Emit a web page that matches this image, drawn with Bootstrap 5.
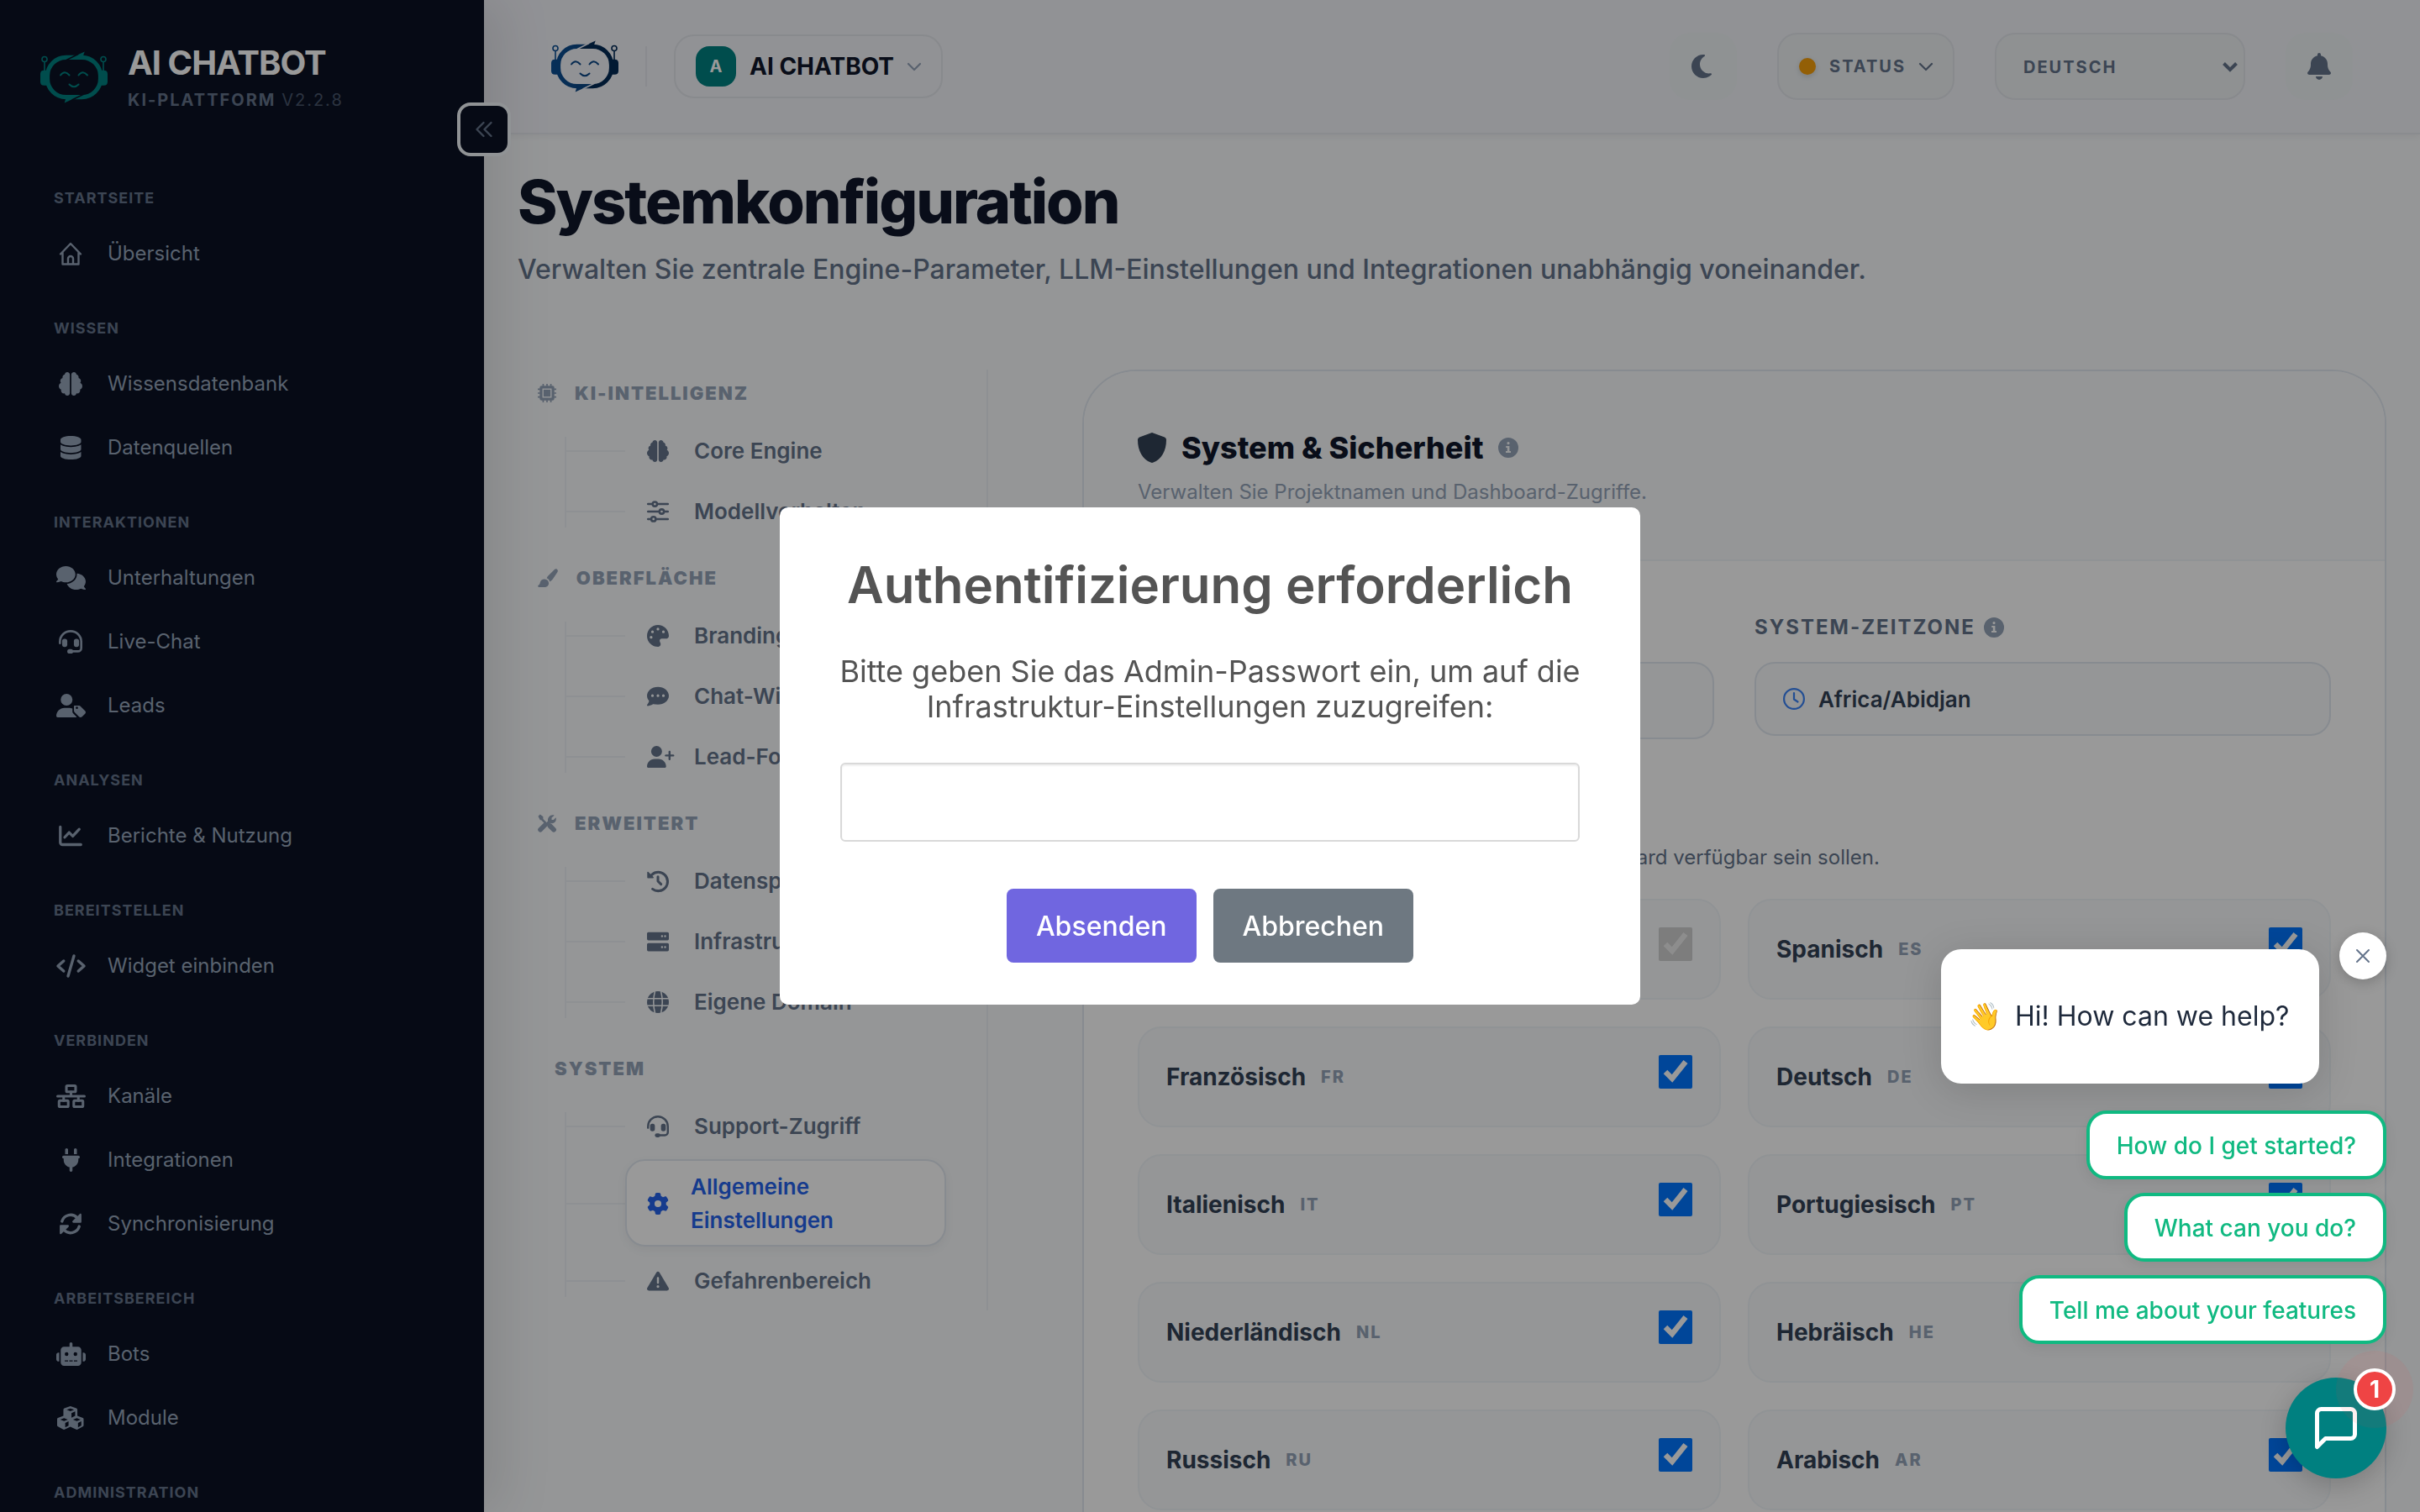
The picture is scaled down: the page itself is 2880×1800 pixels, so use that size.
<!DOCTYPE html>
<html lang="de">
<head>
<meta charset="utf-8">
<meta name="viewport" content="width=device-width, initial-scale=1">
<title>Systemkonfiguration – AI CHATBOT</title>
<link href="https://cdn.jsdelivr.net/npm/bootstrap@5.3.0/dist/css/bootstrap.min.css" rel="stylesheet">
<style>
  body { font-family: Inter, "Liberation Sans", sans-serif; background: #f8fafc; color: #0f172a; font-size: 24px; }
  a { color: inherit; text-decoration: none; }
  svg { display: block; flex: none; overflow: visible; }
  .ic { height: 28px; width: auto; fill: currentColor; }
  .stroked { fill: none; stroke: currentColor; stroke-linecap: round; stroke-linejoin: round; }

  /* Sidebar */
  .app-side { width: 576px; background: #0b1224; color: #94a3b8; padding: 53px 48px 0; box-shadow: 20px 0 60px rgba(0,0,0,.1); z-index: 5; }
  .brand-title { font-size: 40px; font-weight: 700; line-height: 44px; letter-spacing: -1px; color: #fff; }
  .brand-sub { font-size: 20px; line-height: 24px; font-weight: 700; letter-spacing: 2px; color: #64748b; margin-top: 10px; }
  .brand-sub span { font-weight: 400; opacity: .7; }
  .side-groups { margin-top: 93px; padding: 0 16px; }
  .side-group { margin-bottom: 39px; }
  .side-title { font-size: 18px; line-height: 24px; font-weight: 700; letter-spacing: 1px; color: #64748b; margin: 0 0 16px; }
  .side-link { height: 76px; gap: 24px; }
  .side-link .ibox { width: 40px; display: flex; justify-content: center; }
  .side-toggle { position: absolute; left: 544px; top: 122px; width: 64px; height: 64px; border: 4px solid #f1f5f9; border-radius: 16px; background: #0b1224; color: #64748b; padding: 0; z-index: 6; }

  /* Top bar */
  .app-top { height: 160px; padding: 0 80px; background: #f2f3f9; border-bottom: 2px solid #e6e9ef; box-shadow: 0 2px 8px rgba(0,0,0,.06); }
  .vline { width: 2px; height: 48px; background: #e6e8ee; margin: 0 32px; }
  .pill { border: 2px solid #e3e6eb; border-radius: 24px; background: transparent; }
  .project { height: 76px; padding: 0 24px; gap: 16px; font-size: 28px; font-weight: 700; color: #0f172a; }
  .project-ini { width: 48px; height: 48px; border-radius: 16px; background: #008080; color: #fff; font-size: 20px; font-weight: 700; }
  .tool { height: 80px; color: #64748b; background: #eef2f4; font-size: 20px; font-weight: 700; letter-spacing: 2px; }
  .tool-sq { width: 80px; height: 80px; border: 0; border-radius: 24px; background: #eff3f5; color: #64748b; }
  .state-dot { width: 20px; height: 20px; border-radius: 50%; background: #f59e0b; box-shadow: 0 2px 6px rgba(0,0,0,.15); }
  .lang-pick { width: 298px; padding: 2px 32px 0; appearance: none; outline: 0; }
  .lang-arrow { position: absolute; right: 9px; top: 35px; pointer-events: none; color: #64748b; }

  /* Page */
  .page { padding: 40px 40px 0; }
  .page-title { font-size: 72px; line-height: 80px; font-weight: 800; letter-spacing: -2px; margin: 0; color: #0f172a; }
  .page-sub { font-size: 32px; line-height: 40px; font-weight: 500; margin: 21px 0 99px; color: #64748b; }
  .set-nav { width: 560px; flex: none; border-right: 2px solid #edf1f5; padding-bottom: 4px; }
  .set-head { padding: 16px 0 24px 24px; gap: 20px; font-size: 22px; line-height: 24px; font-weight: 900; letter-spacing: 2px; color: #94a3b8; margin: 0; }
  .set-head svg { height: 22px; margin-right: 2px; }
  .set-list + .set-head { margin-top: 20px; }
  .set-list { margin: 0 48px 0 56px; padding: 0 0 0 72px; list-style: none; display: flex; flex-direction: column; gap: 8px; position: relative; }
  .set-list::before { content: ""; position: absolute; left: 0; top: 16px; bottom: 12px; width: 2px; background: #edf1f5; }
  .set-list li { position: relative; }
  .set-list li::before { content: ""; position: absolute; left: -72px; width: 72px; top: 50%; height: 2px; background: #edf1f5; }
  .set-link { position: relative; min-height: 64px; padding: 11px 24px 9px; border: 2px solid transparent; border-radius: 24px; gap: 24px; font-size: 26px; line-height: 40px; font-weight: 600; color: #64748b; }
  .set-link .ibox { width: 32px; flex: none; }
  .set-link svg { height: 26px; }
  .set-link.on { background: #fff; border-color: #e2e8f0; color: #2563eb; box-shadow: 0 4px 12px rgba(0,0,0,.05); }
  .set-link.on .ibox { width: 28px; }

  .panel { border: 2px solid #e2e8f0; border-radius: 64px; background: #fff; overflow: hidden; margin-left: 112px; }
  .panel-top { background: #f8fafc; padding: 64px 64px 62px; border-bottom: 2px solid #f1f5f9; }
  .panel-title { font-size: 36px; line-height: 54px; font-weight: 800; margin: 0; gap: 18px; color: #0f172a; }
  .panel-sub { line-height: 36px; margin: 8px 0 0; color: #94a3b8; }
  .panel-main { padding: 64px; }
  .fld-label { line-height: 30px; font-weight: 700; letter-spacing: 2px; color: #64748b; gap: 10px; margin: 0; }
  .two-col { display: grid; grid-template-columns: 1fr 1fr; }
  .fld { margin-top: 26px; width: 100%; border: 2px solid #e2e8f0; border-radius: 24px; background: #f8fafc; padding: 0 32px; font-size: 26px; font-weight: 600; color: #334155; gap: 16px; text-align: left; }
  .lang-card { height: 120px; border: 2px solid #f1f5f9; border-radius: 28px; background: #f8fafc; padding: 0 32px; }
  .lang-card b { font-size: 28px; font-weight: 700; color: #334155; }
  .lang-card span { font-size: 20px; font-weight: 800; letter-spacing: 2px; color: #94a3b8; margin-left: 18px; }
  .lang-card input { width: 40px; height: 40px; margin: 0 0 12px; }
  .hint { line-height: 36px; color: #64748b; margin: 45px 0 31px; }

  /* Dialog */
  .veil { position: fixed; inset: 0; z-index: 1060; background: rgba(0,0,0,.4); }
  .ask { width: 1024px; border-radius: 10px; background: #fff; color: #545454; padding: 56px 0 50px; text-align: center; }
  .ask h2 { font-size: 60px; line-height: 72px; font-weight: 600; margin: 0; }
  .ask label { display: block; font-size: 36px; line-height: 42px; margin: 46px 0; padding: 0 58px; }
  .ask input { display: block; width: 880px; height: 94px; margin: 0 auto 56px; border: 2px solid #d9d9d9; border-radius: 6px; padding: 0 24px; font-size: 36px; box-shadow: inset 0 2px 2px rgba(0,0,0,.06); outline: 0; }
  .ask-btn { height: 88px; padding: 2px 35px 0; border: 0; border-radius: 8px; font-size: 32px; font-weight: 500; color: #fff; background: #7066e0; }
  .ask-btn-alt { background: #6e7881; }

  /* Chat launcher */
  .chat { position: fixed; right: 40px; bottom: 40px; z-index: 1070; }
  .chat-x { width: 56px; height: 56px; border: 0; border-radius: 50%; background: #fff; color: #64748b; box-shadow: 0 4px 16px rgba(0,0,0,.2); margin: -20px 0 0 24px; padding: 0; }
  .chat-msg { width: 450px; height: 160px; border-radius: 24px; background: #fff; color: #1e293b; font-size: 32px; box-shadow: 0 8px 48px rgba(0,0,0,.15); padding: 0 32px; margin-bottom: 32px; gap: 16px; }
  .chat-q { height: 82px; border: 4px solid #10b981; border-radius: 24px; background: #fff; color: #10b981; font-size: 28px; font-weight: 500; padding: 2px 32px 0; margin-bottom: 16px; box-shadow: 0 4px 16px rgba(0,0,0,.08); }
  .chat-fab { position: relative; width: 120px; height: 120px; border: 0; border-radius: 50%; background: #008080; color: #fff; margin-top: 24px; box-shadow: 0 8px 32px rgba(0,0,0,.2); }
  .chat-count { position: absolute; right: -11px; top: -11px; width: 50px; height: 50px; border: 4px solid #fff; border-radius: 50%; background: #ef4444; font-size: 28px; font-weight: 700; line-height: 42px; box-shadow: 0 0 0 21px rgba(239,68,68,.08); }
</style>
</head>
<body>
<svg width="0" height="0" class="position-absolute" aria-hidden="true">
  <defs>
    <linearGradient id="duo" gradientUnits="userSpaceOnUse" x1="0" y1="0" x2="80" y2="0"><stop offset="0" stop-color="#0b4f94"/><stop offset=".45" stop-color="#0a4786"/><stop offset=".6" stop-color="#022a55"/><stop offset="1" stop-color="#022a55"/></linearGradient>
    <symbol id="i-brain" viewBox="0 0 512 512"><path d="M184 0C214.900 0 240 25.100 240 56V456c0 30.900-25.100 56-56 56c-28.900 0-52.700-21.900-55.700-50.100c-5.200 1.400-10.700 2.100-16.300 2.100c-35.300 0-64-28.700-64-64c0-7.400 1.300-14.600 3.600-21.200C21.400 367.400 0 338.200 0 304c0-31.900 18.700-59.500 45.800-72.300C37.100 220.800 32 207 32 192c0-30.700 21.600-56.300 50.400-62.600C80.800 123.900 80 118 80 112c0-29.900 20.600-55.100 48.300-62.100C131.300 21.900 155.100 0 184 0z"/><path transform="matrix(-1 0 0 1 512 0)" d="M184 0C214.900 0 240 25.100 240 56V456c0 30.900-25.100 56-56 56c-28.900 0-52.700-21.900-55.700-50.100c-5.200 1.400-10.700 2.100-16.300 2.100c-35.300 0-64-28.700-64-64c0-7.400 1.300-14.600 3.600-21.200C21.400 367.400 0 338.200 0 304c0-31.900 18.700-59.500 45.800-72.300C37.100 220.800 32 207 32 192c0-30.700 21.600-56.300 50.400-62.600C80.800 123.900 80 118 80 112c0-29.900 20.600-55.100 48.300-62.100C131.300 21.900 155.100 0 184 0z"/></symbol>
    <symbol id="i-headset" viewBox="0 0 512 512"><path fill="none" stroke="currentColor" stroke-width="48" stroke-linecap="round" d="M24 288v-32a232 232 0 0 1 464 0v136a72 72 0 0 1-72 72H256"/><rect x="72" y="192" width="112" height="176" rx="52"/><rect x="328" y="192" width="112" height="176" rx="52"/><rect x="184" y="416" width="128" height="96" rx="48"/></symbol>
  </defs>
</svg>

<div class="d-flex vh-100 overflow-hidden position-relative">
  <aside class="app-side flex-shrink-0">
    <div class="d-flex align-items-center gap-4">
      <svg width="80" height="64" viewBox="0 0 80 62" fill="none" stroke="#008080" aria-hidden="true">
        <rect x="8.500" y="7.300" width="63" height="47.400" rx="22" stroke-width="5.200"/>
        <path d="M32 10L52.700 .500L49.500 10zM49 52L28.700 61.500L31.500 52z" fill="#008080" stroke="none"/>
        <path d="M31 10.500L45 3.500M37.500 58L52 51" stroke="#0b1224" stroke-width="1.400"/>
        <path d="M0 27q0-4.300 4.500-4.300H8v18H4.500Q0 40.700 0 36.500zM80 27q0-4.300-4.500-4.300H72v18h3.500q4.500 0 4.500-4.200z" fill="#008080" stroke="none"/>
        <path d="M5 12.500V24M75 12.500V24" stroke-width="1.600"/><circle cx="5" cy="9.500" r="3" stroke-width="1.600"/><circle cx="75" cy="9.500" r="3" stroke-width="1.600"/>
        <path d="M24 28.500q5-6.500 10.500 0M45.500 28.500q5-6.500 10.500 0M34.500 39.500q5.500 5.500 11 0" stroke-width="2" stroke-linecap="round"/>
      </svg>
      <div>
        <div class="brand-title">AI CHATBOT</div>
        <div class="brand-sub">KI-PLATTFORM <span>V2.2.8</span></div>
      </div>
    </div>
    <nav class="side-groups">
      <section class="side-group"><h6 class="side-title">STARTSEITE</h6>
        <a href="#" class="side-link d-flex align-items-center"><span class="ibox"><svg class="ic stroked" viewBox="0 0 28 28" stroke-width="2.400"><path d="M2 14.500L14 2l12 12.500M4.500 12.500v14h19v-14M11 26v-6a3 3 0 0 1 6 0v6"/></svg></span>Übersicht</a>
      </section>
      <section class="side-group"><h6 class="side-title">WISSEN</h6>
        <a href="#" class="side-link d-flex align-items-center"><span class="ibox"><svg class="ic" viewBox="0 0 512 512"><use href="#i-brain"/></svg></span>Wissensdatenbank</a>
        <a href="#" class="side-link d-flex align-items-center"><span class="ibox"><svg class="ic" viewBox="0 0 448 512"><path d="M448 80v48c0 44.200-100.300 80-224 80S0 172.200 0 128V80C0 35.800 100.300 0 224 0S448 35.800 448 80zM393.200 214.700c20.800-7.400 39.900-16.900 54.800-28.600V288c0 44.200-100.300 80-224 80S0 332.200 0 288V186.100c14.900 11.800 34 21.200 54.800 28.600C99.700 230.700 159.500 240 224 240s124.300-9.300 169.200-25.300zM0 346.100c14.900 11.800 34 21.200 54.800 28.600C99.700 390.700 159.500 400 224 400s124.300-9.300 169.200-25.300c20.800-7.400 39.900-16.900 54.800-28.600V432c0 44.200-100.300 80-224 80S0 476.200 0 432V346.100z"/></svg></span>Datenquellen</a>
      </section>
      <section class="side-group"><h6 class="side-title">INTERAKTIONEN</h6>
        <a href="#" class="side-link d-flex align-items-center"><span class="ibox"><svg class="ic" viewBox="0 0 640 512"><path d="M208 352c114.900 0 208-78.800 208-176S322.900 0 208 0S0 78.800 0 176c0 38.600 14.700 74.300 39.600 103.400c-3.500 9.400-8.700 17.700-14.200 24.700c-4.800 6.200-9.700 11-13.300 14.300c-1.800 1.600-3.300 2.900-4.300 3.700c-.5 .4-.9 .7-1.100 .8l-.2 .2C1 327.200-1.400 334.400 .8 340.900S9.100 352 16 352c21.800 0 43.800-5.600 62.100-12.500c9.200-3.500 17.800-7.400 25.200-11.400C134.100 343.300 169.800 352 208 352zM448 176c0 112.300-99.100 196.900-216.500 207C255.800 457.400 336.400 512 432 512c38.200 0 73.900-8.700 104.700-23.900c7.500 4 16 7.900 25.200 11.400c18.300 6.900 40.300 12.500 62.100 12.500c6.900 0 13.100-4.500 15.200-11.100c2.100-6.600-.2-13.800-5.800-17.900c-3-2-20-17-33.100-43.700c24.900-29 39.600-64.700 39.600-103.400c0-92.800-84.900-168.900-192.600-175.500c.4 5.100 .6 10.300 .6 15.500z"/></svg></span>Unterhaltungen</a>
        <a href="#" class="side-link d-flex align-items-center"><span class="ibox"><svg class="ic" viewBox="0 0 512 512"><use href="#i-headset"/></svg></span>Live-Chat</a>
        <a href="#" class="side-link d-flex align-items-center"><span class="ibox"><svg class="ic" viewBox="0 0 640 512"><path d="M224 256A128 128 0 1 0 224 0a128 128 0 1 0 0 256zM178 304C80 304 0 384 0 482c0 17 13 30 30 30H416c13 0 22-5 27-10l-72-74c-15-15-20-27-20-45v-63c-24-10-48-16-81-16z"/><path fill-rule="evenodd" d="M384 270v97c0 14 6 27 15 37l96 96c18 18 47 18 65 0l66-66c18-18 18-47 0-65l-97-97c-9-9-22-14-35-14h-98c-7 0-12 5-12 12zm64 58a24 24 0 1 1 0-48a24 24 0 1 1 0 48z"/></svg></span>Leads</a>
      </section>
      <section class="side-group"><h6 class="side-title">ANALYSEN</h6>
        <a href="#" class="side-link d-flex align-items-center"><span class="ibox"><svg class="ic stroked" viewBox="0 0 512 512" stroke-width="60"><path d="M32 64v336c0 26 22 48 48 48h400M128 288l96-104l80 80l140-150"/></svg></span>Berichte &amp; Nutzung</a>
      </section>
      <section class="side-group"><h6 class="side-title">BEREITSTELLEN</h6>
        <a href="#" class="side-link d-flex align-items-center"><span class="ibox"><svg class="ic stroked" viewBox="0 0 640 512" stroke-width="62"><path d="M160 146L36 256l124 110M480 146l124 110l-124 110M384 36L256 476"/></svg></span>Widget einbinden</a>
      </section>
      <section class="side-group"><h6 class="side-title">VERBINDEN</h6>
        <a href="#" class="side-link d-flex align-items-center"><span class="ibox"><svg class="ic stroked" viewBox="0 0 640 512" stroke-width="56"><path d="M28 256h584M320 160v96M160 256v96M480 256v96"/><rect x="220" y="28" width="200" height="132" rx="20"/><rect x="60" y="352" width="200" height="132" rx="20"/><rect x="380" y="352" width="200" height="132" rx="20"/></svg></span>Kanäle</a>
        <a href="#" class="side-link d-flex align-items-center"><span class="ibox"><svg class="ic" viewBox="0 0 384 512"><path d="M96 0C78.300 0 64 14.300 64 32v96h64V32c0-17.700-14.300-32-32-32zM288 0c-17.700 0-32 14.300-32 32v96h64V32c0-17.700-14.300-32-32-32zM32 160c-17.700 0-32 14.300-32 32s14.300 32 32 32v32c0 77.400 55 142 128 156.800V480c0 17.700 14.300 32 32 32s32-14.300 32-32V412.800C297 398 352 333.400 352 256V224c17.700 0 32-14.300 32-32s-14.300-32-32-32H32z"/></svg></span>Integrationen</a>
        <a href="#" class="side-link d-flex align-items-center"><span class="ibox"><svg class="ic" viewBox="0 0 512 512"><path fill="none" stroke="currentColor" stroke-width="62" stroke-linecap="round" d="M68 200A196 196 0 0 1 400 125M444 312A196 196 0 0 1 112 387"/><path d="M492 56v152c0 14-10 24-24 24H316c-22 0-30-24-16-38L454 40c14-14 38-6 38 16zM20 456V304c0-14 10-24 24-24h152c22 0 30 24 16 38L58 472c-14 14-38 6-38-16z"/></svg></span>Synchronisierung</a>
      </section>
      <section class="side-group"><h6 class="side-title">ARBEITSBEREICH</h6>
        <a href="#" class="side-link d-flex align-items-center"><span class="ibox"><svg class="ic" viewBox="0 0 640 512"><path fill-rule="evenodd" d="M320 0c18 0 32 14 32 32v64h120c40 0 72 32 72 72v272c0 40-32 72-72 72H168c-40 0-72-32-72-72V168c0-40 32-72 72-72h120V32c0-18 14-32 32-32zM184 392v24h72v-24zm100 0v24h72v-24zm100 0v24h72v-24zM264 256a40 40 0 1 0-80 0a40 40 0 1 0 80 0zm152 40a40 40 0 1 0 0-80a40 40 0 1 0 0 80zM48 224h16v192H48c-26 0-48-22-48-48v-96c0-26 22-48 48-48zm544 0c26 0 48 22 48 48v96c0 26-22 48-48 48h-16V224z"/></svg></span>Bots</a>
        <a href="#" class="side-link d-flex align-items-center"><span class="ibox"><svg class="ic" viewBox="0 0 576 512"><path fill-rule="evenodd" d="M288 0l132 46q20 8 20 30v136l120 42q16 8 16 28v132q0 20-18 30l-116 64q-14 6-28 0l-126-62l-126 62q-14 6-28 0L18 444Q0 434 0 414V282q0-20 16-28l120-42V76q0-22 20-30zM288 48l-80 30l80 30l80-30zM312 150v100l80-38v-98zM150 262l-82 30l82 32l82-32zM176 366v96l72-36v-96zM428 262l-82 30l82 32l82-32zM454 366v96l72-40v-92z"/></svg></span>Module</a>
      </section>
      <section class="side-group"><h6 class="side-title">ADMINISTRATION</h6></section>
    </nav>
  </aside>
  <button class="side-toggle d-flex align-items-center justify-content-center" type="button" aria-label="Seitenleiste einklappen"><svg class="stroked" width="20" height="18" viewBox="0 0 20 18" stroke-width="2.400"><path d="M9.500 1L1.500 9l8 8M18.500 1l-8 8l8 8"/></svg></button>

  <div class="flex-grow-1 d-flex flex-column" style="min-width:0">
    <header class="app-top d-flex align-items-center flex-shrink-0">
      <svg width="80" height="64" viewBox="0 0 80 62" fill="none" stroke="url(#duo)" aria-hidden="true">
        <rect x="8.500" y="7.300" width="63" height="47.400" rx="22" stroke-width="5.200"/>
        <path d="M32 10L52.700 .500L49.500 10z" fill="#022a55" stroke="none"/><path d="M49 52L28.700 61.500L31.500 52z" fill="#0a4786" stroke="none"/>
        <path d="M31 10.500L45 3.500M37.500 58L52 51" stroke="#f2f3f9" stroke-width="1.400"/>
        <path d="M0 27q0-4.300 4.500-4.300H8v18H4.500Q0 40.700 0 36.500zM80 27q0-4.300-4.500-4.300H72v18h3.500q4.500 0 4.500-4.200z" fill="url(#duo)" stroke="none"/>
        <path d="M5 12.500V24" stroke="#0b4f94" stroke-width="1.600"/><path d="M75 12.500V24" stroke="#022a55" stroke-width="1.600"/><circle cx="5" cy="9.500" r="3" stroke-width="1.600"/><circle cx="75" cy="9.500" r="3" stroke-width="1.600"/>
        <path d="M24 28.500q5-6.500 10.500 0M45.500 28.500q5-6.500 10.500 0M34.500 39.500q5.500 5.500 11 0" stroke="#0a4786" stroke-width="2" stroke-linecap="round"/>
      </svg>
      <div class="vline"></div>
      <button type="button" class="project pill d-flex align-items-center"><span class="project-ini d-flex align-items-center justify-content-center">A</span>AI CHATBOT<svg class="stroked" style="color:#94a3b8" width="16" height="9" viewBox="0 0 16 9" stroke-width="2.200"><path d="M1 1l7 7l7-7"/></svg></button>
      <div class="d-flex align-items-center ms-auto gap-5">
        <button type="button" class="tool-sq d-flex align-items-center justify-content-center" aria-label="Dunkelmodus"><svg class="ic" viewBox="0 32 448 448"><path d="M223.500 32C100 32 0 132.300 0 256S100 480 223.500 480c60.600 0 115.500-24.200 155.800-63.400c5-4.900 6.300-12.500 3.100-18.700s-10.100-9.700-17-8.500c-9.800 1.700-19.800 2.600-30.100 2.600c-96.900 0-175.500-78.800-175.500-176c0-65.800 36-123.100 89.300-153.300c6.100-3.500 9.200-10.500 7.700-17.300s-7.300-11.900-14.300-12.500c-6.300-.5-12.600-.8-19-.8z"/></svg></button>
        <button type="button" class="tool pill d-flex align-items-center gap-3 px-4"><span class="state-dot"></span>STATUS<svg class="stroked" width="16" height="9" viewBox="0 0 16 9" stroke-width="2.200"><path d="M1 1l7 7l7-7"/></svg></button>
        <div class="position-relative">
          <select class="tool pill lang-pick" aria-label="Sprache"><option>DEUTSCH</option></select>
          <svg class="lang-arrow stroked" width="18" height="12" viewBox="0 0 18 12" stroke-width="4" style="stroke-linecap:butt;stroke-linejoin:miter"><path d="M1.500 1.500L9 9l7.500-7.500"/></svg>
        </div>
        <button type="button" class="tool-sq d-flex align-items-center justify-content-center" aria-label="Benachrichtigungen"><svg class="ic" style="height:32px" viewBox="0 0 448 512"><path d="M224 0c-17.700 0-32 14.300-32 32V51.200C119 66 64 130.600 64 208v18.800c0 47-17.300 92.400-48.500 127.600l-7.400 8.300c-8.400 9.400-10.400 22.900-5.300 34.400S19.400 416 32 416H416c12.600 0 24-7.400 29.200-18.900s3.100-25-5.300-34.400l-7.400-8.300C401.300 319.200 384 273.900 384 226.800V208c0-77.400-55-142-128-156.800V32c0-17.700-14.300-32-32-32zm45.300 493.300c12-12 18.700-28.300 18.700-45.300H160c0 17 6.700 33.300 18.700 45.300s28.300 18.700 45.300 18.700s33.300-6.700 45.300-18.700z"/></svg></button>
      </div>
    </header>

    <main class="page">
      <h1 class="page-title">Systemkonfiguration</h1>
      <p class="page-sub">Verwalten Sie zentrale Engine-Parameter, LLM-Einstellungen und Integrationen unabhängig voneinander.</p>
      <div class="d-flex align-items-start">
        <nav class="set-nav">
          <h2 class="set-head d-flex align-items-center"><svg class="ic" viewBox="0 0 24 24"><path d="M7 0v4M12 0v4M17 0v4M7 20v4M12 20v4M17 20v4M0 7h4M0 12h4M0 17h4M20 7h4M20 12h4M20 17h4" stroke="currentColor" stroke-width="1.800"/><path fill-rule="evenodd" d="M5 2.500h14a2.500 2.500 0 0 1 2.500 2.500v14a2.500 2.500 0 0 1-2.500 2.500H5A2.500 2.500 0 0 1 2.500 19V5A2.500 2.500 0 0 1 5 2.500zM6 6v12h12V6z"/><path d="M7.500 7.500h9v9h-9z"/></svg>KI-INTELLIGENZ</h2>
          <ul class="set-list">
            <li><a href="#" class="set-link d-flex align-items-center"><span class="ibox"><svg class="ic" viewBox="0 0 512 512"><use href="#i-brain"/></svg></span>Core Engine</a></li>
            <li><a href="#" class="set-link d-flex align-items-center"><span class="ibox"><svg class="ic stroked" viewBox="0 0 512 512" stroke-width="50"><path d="M24 80h104M240 80h248M24 256h264M400 256h88M24 432h72M208 432h280"/><circle cx="184" cy="80" r="52"/><circle cx="344" cy="256" r="52"/><circle cx="152" cy="432" r="52"/></svg></span>Modellverhalten</a></li>
          </ul>
          <h2 class="set-head d-flex align-items-center"><svg class="ic" viewBox="0 0 26 24"><path d="M25 .8c1.200.9 1.300 2.300.6 3.500l-6 9.200c-1 1.500-2.300 2.600-4 3.300c-.5-2.200-2-3.800-4-4.500c.6-1.500 1.500-2.800 2.700-3.800L22 .900c1-.8 2.100-.8 3-.1zM10 13.800c2.500.5 4.300 2.500 4.300 5c0 3-2.300 5.200-5.800 5.200H1.500C.2 24-.4 22.400.8 21.600c1.600-1 2-2 2.300-3.800c.6-2.800 3.400-4.700 6.900-4z"/></svg>OBERFLÄCHE</h2>
          <ul class="set-list">
            <li><a href="#" class="set-link d-flex align-items-center"><span class="ibox"><svg class="ic" viewBox="0 0 512 512"><path d="M512 256c0 .9 0 1.800 0 2.700c-.4 36.500-33.600 61.300-70.100 61.300H344c-26.500 0-48 21.500-48 48c0 3.400 .4 6.700 1 9.900c2.100 10.200 6.500 20 10.800 29.900c6.100 13.800 12.100 27.500 12.100 42c0 31.800-21.600 60.700-53.400 62c-3.500 .1-7 .2-10.600 .2C114.600 512 0 397.400 0 256S114.600 0 256 0S512 114.600 512 256zM128 288a32 32 0 1 0 -64 0 32 32 0 1 0 64 0zm0-96a32 32 0 1 0 0-64 32 32 0 1 0 0 64zM288 96a32 32 0 1 0 -64 0 32 32 0 1 0 64 0zm96 96a32 32 0 1 0 0-64 32 32 0 1 0 0 64z"/></svg></span>Branding</a></li>
            <li><a href="#" class="set-link d-flex align-items-center"><span class="ibox"><svg class="ic" viewBox="0 0 512 512"><path fill-rule="evenodd" d="M256 448c141 0 256-93 256-208S397 32 256 32S0 125 0 240c0 45 18 87 48 121c-5 46-30 75-42 87c-13 14-4 32 12 32c55 0 97-22 122-40c35 5 75 8 116 8zM128 208a32 32 0 1 1 0 64a32 32 0 1 1 0-64zm128 0a32 32 0 1 1 0 64a32 32 0 1 1 0-64zm128 0a32 32 0 1 1 0 64a32 32 0 1 1 0-64z"/></svg></span>Chat-Widget</a></li>
            <li><a href="#" class="set-link d-flex align-items-center"><span class="ibox"><svg class="ic" viewBox="0 0 640 512"><path d="M224 256A128 128 0 1 0 224 0a128 128 0 1 0 0 256zM178 304C80 304 0 384 0 482c0 17 13 30 30 30H418c17 0 30-13 30-30C448 384 368 304 270 304zM504 312v-64h-64c-32 0-32-48 0-48h64v-64c0-32 48-32 48 0v64h64c32 0 32 48 0 48h-64v64c0 32-48 32-48 0z"/></svg></span>Lead-Formular</a></li>
          </ul>
          <h2 class="set-head d-flex align-items-center"><svg class="ic" viewBox="0 0 24 24"><path d="M.5 3L3 .5L7 3.500v3l4 4l-2 2l-4.500-4.500H3zM13.500 12.500c1.500-.8 3.300-.5 4.500.7l5 5a3 3 0 0 1-4.500 4.500l-5-5c-1.200-1.200-1.400-3-.7-4.500z"/><path d="M21.500 1.800L18 5v2.500h2.500L23.500 4.500c1.200 3.500-1 7.500-5 7.700c-1 0-1.500 0-2.300-.4L5.500 22.600a3 3 0 0 1-4.400-4.300l8.600-8.500l1.500 1.500l2-2c-1-5 3.800-9.400 8.300-7.500z"/></svg>ERWEITERT</h2>
          <ul class="set-list">
            <li><a href="#" class="set-link d-flex align-items-center"><span class="ibox"><svg class="ic stroked" viewBox="0 0 512 512" stroke-width="60"><path d="M112 104A220 220 0 1 1 130 440M256 152v104l72 72"/><path fill="currentColor" stroke-width="30" d="M20 50v120h120z"/></svg></span>Datenspeicherung</a></li>
            <li><a href="#" class="set-link d-flex align-items-center"><span class="ibox"><svg class="ic" viewBox="0 0 512 512"><path fill-rule="evenodd" d="M32 32h448q32 0 32 32v128q0 32-32 32H32q-32 0-32-32V64Q0 32 32 32zM352 104a24 24 0 1 0 0 48a24 24 0 1 0 0-48zm72 0a24 24 0 1 0 0 48a24 24 0 1 0 0-48zM32 288h448q32 0 32 32v128q0 32-32 32H32q-32 0-32-32V320q0-32 32-32zm320 72a24 24 0 1 0 0 48a24 24 0 1 0 0-48zm72 0a24 24 0 1 0 0 48a24 24 0 1 0 0-48z"/></svg></span>Infrastruktur</a></li>
            <li><a href="#" class="set-link d-flex align-items-center"><span class="ibox"><svg class="ic" viewBox="0 0 512 512"><circle cx="256" cy="256" r="256"/><path fill="none" stroke="#f8fafc" stroke-width="30" d="M0 174h512M0 338h512M186 0q-66 256 0 512M326 0q66 256 0 512"/></svg></span>Eigene Domain</a></li>
          </ul>
          <h2 class="set-head d-flex align-items-center"><span></span>SYSTEM</h2>
          <ul class="set-list">
            <li><a href="#" class="set-link d-flex align-items-center"><span class="ibox"><svg class="ic" viewBox="0 0 512 512"><use href="#i-headset"/></svg></span>Support-Zugriff</a></li>
            <li><a href="#" class="set-link on d-flex align-items-center" aria-current="page"><span class="ibox"><svg class="ic" viewBox="0 0 512 512"><path d="M495.900 166.600c3.200 8.700 .5 18.400-6.400 24.600l-43.300 39.400c1.100 8.300 1.700 16.800 1.700 25.400s-.6 17.100-1.700 25.400l43.300 39.400c6.900 6.200 9.600 15.900 6.400 24.600c-4.400 11.900-9.700 23.300-15.800 34.300l-4.700 8.100c-6.600 11-14 21.400-22.100 31.200c-5.900 7.200-15.700 9.600-24.500 6.800l-55.700-17.700c-13.400 10.300-28.200 18.900-44 25.400l-12.500 57.100c-2 9.100-9 16.300-18.200 17.800c-13.800 2.300-28 3.500-42.500 3.500s-28.700-1.200-42.500-3.500c-9.200-1.500-16.200-8.700-18.200-17.800l-12.500-57.100c-15.800-6.500-30.600-15.100-44-25.400L83.100 425.900c-8.800 2.800-18.600 .3-24.500-6.800c-8.100-9.800-15.500-20.200-22.100-31.200l-4.700-8.100c-6.100-11-11.400-22.400-15.800-34.300c-3.200-8.700-.5-18.400 6.400-24.600l43.300-39.400C64.600 273.100 64 264.600 64 256s.6-17.100 1.700-25.400L22.400 191.200c-6.900-6.200-9.600-15.900-6.400-24.600c4.400-11.900 9.700-23.300 15.800-34.300l4.700-8.100c6.600-11 14-21.400 22.100-31.200c5.900-7.200 15.700-9.600 24.500-6.800l55.700 17.700c13.400-10.300 28.200-18.900 44-25.400l12.500-57.100c2-9.100 9-16.300 18.200-17.800C227.300 1.200 241.500 0 256 0s28.700 1.200 42.500 3.500c9.200 1.500 16.200 8.700 18.200 17.800l12.500 57.100c15.800 6.500 30.600 15.100 44 25.400l55.700-17.700c8.800-2.800 18.600-.3 24.500 6.800c8.100 9.800 15.500 20.200 22.100 31.200l4.700 8.100c6.100 11 11.400 22.400 15.800 34.300zM256 336a80 80 0 1 0 0-160 80 80 0 1 0 0 160z"/></svg></span>Allgemeine Einstellungen</a></li>
            <li><a href="#" class="set-link d-flex align-items-center"><span class="ibox"><svg class="ic" viewBox="0 0 512 512"><path fill-rule="evenodd" d="M256 32c14 0 27 7 35 20l216 368c16 28-4 60-35 60H40c-31 0-51-32-35-60L221 52c8-13 21-20 35-20zm0 128c-13 0-24 11-24 24v112c0 32 48 32 48 0V184c0-13-11-24-24-24zm0 256a32 32 0 1 0 0-64a32 32 0 1 0 0 64z"/></svg></span>Gefahrenbereich</a></li>
          </ul>
        </nav>

        <section class="panel flex-grow-1">
          <header class="panel-top">
            <h2 class="panel-title d-flex align-items-center"><svg width="34" height="36" viewBox="0 0 34 36" fill="#334155"><path d="M17 0l15 5.500q2 .8 2 3C34 22 28 32 18.500 35.600q-1.500.6-3 0C6 32 0 22 0 8.500q0-2.200 2-3z"/></svg>System &amp; Sicherheit<svg width="24" height="24" viewBox="0 0 24 24" fill="#94a3b8"><path fill-rule="evenodd" d="M12 0a12 12 0 1 1 0 24a12 12 0 0 1 0-24zM12 5a1.600 1.600 0 1 0 0 3.200A1.600 1.600 0 0 0 12 5zM9.200 10v2h1.600v4H9v2h6v-2h-1.600v-6z"/></svg></h2>
            <p class="panel-sub">Verwalten Sie Projektnamen und Dashboard-Zugriffe.</p>
          </header>
          <div class="panel-main">
            <div class="two-col gap-5">
              <div><label class="fld-label d-flex align-items-center" for="pname">PROJEKTNAME</label><input id="pname" class="fld" style="height:92px" value="AI CHATBOT"></div>
              <div><label class="fld-label d-flex align-items-center" for="tz">SYSTEM-ZEITZONE<svg width="24" height="24" viewBox="0 0 24 24" fill="#94a3b8"><path fill-rule="evenodd" d="M12 0a12 12 0 1 1 0 24a12 12 0 0 1 0-24zM12 5a1.600 1.600 0 1 0 0 3.200A1.600 1.600 0 0 0 12 5zM9.200 10v2h1.600v4H9v2h6v-2h-1.600v-6z"/></svg></label>
                <button id="tz" type="button" class="fld d-flex align-items-center" style="height:88px"><svg class="stroked" style="color:#3b82f6" width="26" height="26" viewBox="0 0 26 26" stroke-width="2.200"><circle cx="13" cy="13" r="11.900"/><path d="M13 6v7.500l4.500 3"/></svg>Africa/Abidjan</button></div>
            </div>
            <div class="fld-label mt-5">DASHBOARD-SPRACHEN</div>
            <p class="hint">Wählen Sie aus, welche Sprachen im Admin-Dashboard verfügbar sein sollen.</p>
            <div class="two-col" style="gap:32px">
              <label class="lang-card d-flex align-items-center"><b>Englisch</b><span>EN</span><input class="ms-auto" type="checkbox" checked disabled></label>
              <label class="lang-card d-flex align-items-center"><b>Spanisch</b><span>ES</span><input class="ms-auto" type="checkbox" checked></label>
              <label class="lang-card d-flex align-items-center"><b>Französisch</b><span>FR</span><input class="ms-auto" type="checkbox" checked></label>
              <label class="lang-card d-flex align-items-center"><b>Deutsch</b><span>DE</span><input class="ms-auto" type="checkbox" checked></label>
              <label class="lang-card d-flex align-items-center"><b>Italienisch</b><span>IT</span><input class="ms-auto" type="checkbox" checked></label>
              <label class="lang-card d-flex align-items-center"><b>Portugiesisch</b><span>PT</span><input class="ms-auto" type="checkbox" checked></label>
              <label class="lang-card d-flex align-items-center"><b>Niederländisch</b><span>NL</span><input class="ms-auto" type="checkbox" checked></label>
              <label class="lang-card d-flex align-items-center"><b>Hebräisch</b><span>HE</span><input class="ms-auto" type="checkbox" checked></label>
              <label class="lang-card d-flex align-items-center"><b>Russisch</b><span>RU</span><input class="ms-auto" type="checkbox" checked></label>
              <label class="lang-card d-flex align-items-center"><b>Arabisch</b><span>AR</span><input class="ms-auto" type="checkbox" checked></label>
            </div>
          </div>
        </section>
      </div>
    </main>
  </div>
</div>

<div class="veil d-flex align-items-center justify-content-center">
  <div class="ask" role="dialog" aria-modal="true" aria-labelledby="ask-title">
    <h2 id="ask-title">Authentifizierung erforderlich</h2>
    <label for="ask-pw">Bitte geben Sie das Admin-Passwort ein, um auf die Infrastruktur-Einstellungen zuzugreifen:</label>
    <input id="ask-pw" type="password">
    <div class="d-flex justify-content-center" style="gap:20px">
      <button type="button" class="ask-btn">Absenden</button>
      <button type="button" class="ask-btn ask-btn-alt">Abbrechen</button>
    </div>
  </div>
</div>

<div class="chat d-flex flex-column align-items-end">
  <div class="d-flex align-items-start">
    <div class="chat-msg d-flex align-items-center text-nowrap"><span>👋</span><span>Hi! How can we help?</span></div>
    <button type="button" class="chat-x d-flex align-items-center justify-content-center" aria-label="Schließen"><svg class="stroked" width="16" height="16" viewBox="0 0 16 16" stroke-width="2"><path d="M1 1l14 14M15 1L1 15"/></svg></button>
  </div>
  <button type="button" class="chat-q">How do I get started?</button>
  <button type="button" class="chat-q">What can you do?</button>
  <button type="button" class="chat-q">Tell me about your features</button>
  <button type="button" class="chat-fab d-flex align-items-center justify-content-center" aria-label="Chat öffnen"><svg class="stroked" width="60" height="60" viewBox="0 0 24 24" stroke-width="2"><path d="M21 15a2 2 0 0 1-2 2H7l-4 4V5a2 2 0 0 1 2-2h14a2 2 0 0 1 2 2z"/></svg><span class="chat-count">1</span></button>
</div>
<script src="https://cdn.jsdelivr.net/npm/bootstrap@5.3.0/dist/js/bootstrap.bundle.min.js"></script>
</body>
</html>
